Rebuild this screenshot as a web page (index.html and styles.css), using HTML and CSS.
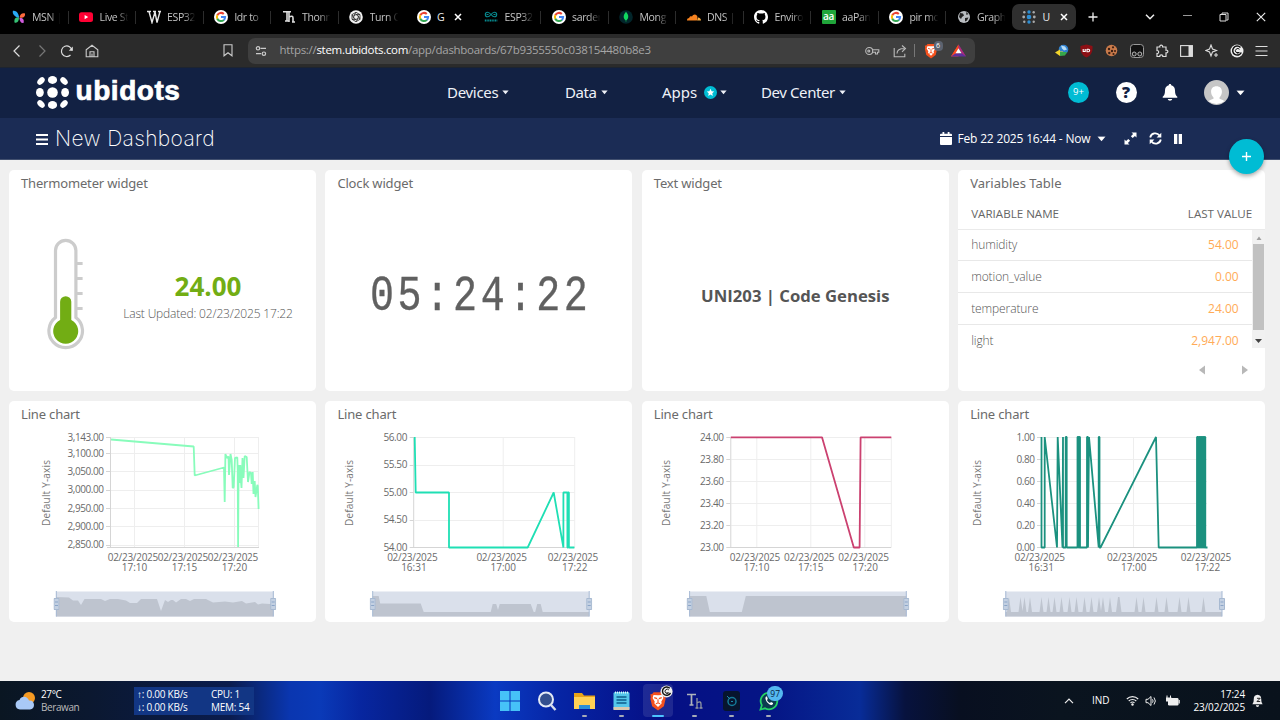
FILE: index.html
```html
<!DOCTYPE html>
<html lang="en">
<head>
<meta charset="utf-8">
<title>Ubidots | New Dashboard</title>
<link rel="stylesheet" href="styles.css">
</head>
<body>
<svg width="0" height="0" class="defs">
  <defs>
    <symbol id="google" viewBox="0 0 14 14"><circle cx="7" cy="7" r="7" fill="#fff"/><g fill="none" stroke-width="2"><path d="M3.3 5.2A4.1 4.1 0 0 1 9.8 4" stroke="#ea4335"/><path d="M3.4 9A4.1 4.1 0 0 1 3.4 5" stroke="#fbbc05"/><path d="M9.9 9.9A4.1 4.1 0 0 1 3.3 8.8" stroke="#34a853"/><path d="M7 7h4.1a4.1 4.1 0 0 1-1.3 3" stroke="#4285f4"/></g></symbol>
    <symbol id="brave" viewBox="0 0 14 16"><path d="M3.5 1h7l1.2 1.4 1.4.2-.3 2.3.3 1.2-1.4 6L7 15.6 2.300 12.100.9 6.100 1.200 4.900.9 2.600 2.300 2.400z" fill="#f4511e"/><path d="M7 3.300 10.600 3.200 11.300 5.500 9.600 8.500 10 9.700 7 12.800 4 9.700 4.400 8.500 2.700 5.500 3.400 3.200z" fill="#fff"/><path d="M4 5.300l2.300.8M10 5.300l-2.300.8M7 6.500v3M5.300 10.300 7 9.400l1.700.9" stroke="#f4511e" stroke-width=".9" fill="none"/></symbol>
    <symbol id="swirl" viewBox="0 0 14 14"><circle cx="7" cy="7" r="6.500" fill="#eee"/><path d="M10.500 3.500A4.500 4.500 0 1 0 11.300 8.500" fill="none" stroke="#111" stroke-width="1.500"/><path d="M9.500 5.300A2.300 2.300 0 1 0 9.300 8.500H7" fill="none" stroke="#111" stroke-width="1"/></symbol>
    <symbol id="handle" viewBox="0 0 6 12"><path d="M.5.500h5v11h-5z" fill="#c3d0e2" stroke="#a7b9d1"/><path d="M1.500 4h3M1.500 7.500h3" stroke="#8ba5c8"/></symbol>
    <symbol id="caret" viewBox="0 0 8 5"><path d="M.4.200h7.200L4 4.600z" fill="currentColor"/></symbol>
  </defs>
</svg>

<div class="tabs">
  <div class="tab"><svg width="14" height="14" viewBox="0 0 14 14"><path d="M6.500 8C1 6 .2 2.500 1 .800 4 0 6.500 3 7 7z" fill="#29a9f5"/><path d="M7 7.500C3 7 2 9 2.500 12.500 5.500 13.500 7 11 7 7.500z" fill="#36c275"/><path d="M7.500 7.500C8 4 10.500 2.500 13 3.500c.5 3-1.500 5-5.500 4z" fill="#ff6a3d"/><path d="M7.500 8c3-.5 5 1 4 5C9 13.500 7.500 11 7.500 8z" fill="#d05bdc"/></svg><span>MSN |</span></div>
  <div class="tab"><svg width="14" height="14" viewBox="0 0 14 14"><rect y="2.200" width="14" height="9.800" rx="2.500" fill="#f03"/><path d="M5.600 5v4.200L9.200 7.100z" fill="#fff"/></svg><span>Live St</span></div>
  <div class="tab"><svg width="14" height="14" viewBox="0 0 14 14"><path d="M0 1.500h4M2 1.500l3 11 3-10.500 2 10.500 3-11M6 1.500h3M11 1.500h3" fill="none" stroke="#e8e8e8" stroke-width="1.400"/></svg><span>ESP32</span></div>
  <div class="tab"><svg width="14" height="14"><use href="#google"/></svg><span>ldr to</span></div>
  <div class="tab"><svg width="14" height="14" viewBox="0 0 14 14"><path d="M1 1.800h8M5 1.800V11M3 11h4M7 1.800V12M7 7q4-2 4 1v4M10 12h3" fill="none" stroke="#ddd" stroke-width="1.600"/></svg><span>Thonn</span></div>
  <div class="tab quiet"><svg width="14" height="14" viewBox="0 0 14 14"><circle cx="7" cy="7" r="6.800" fill="#f2f2f2"/><g fill="none" stroke="#222" stroke-width=".8"><path d="M7 2.300l4 2.300v4.700l-4 2.400-4-2.400V4.600z"/><path d="M7 4.500l2.200 1.300v2.500L7 9.500 4.800 8.300V5.800zM7 2.300l-2.200 3.500M11 4.600 7 4.500M11 9.300 9.200 5.800M7 11.700l2.200-3.400M3 9.300l4 .2M3 4.600l1.800 3.700"/></g></svg><span>Turn C</span></div>
  <div class="tab quiet"><svg width="14" height="14"><use href="#google"/></svg><span class="short">G</span><svg class="x" width="8" height="8" viewBox="0 0 8 8"><path d="M1 1l6 6M7 1 1 7" stroke="#fff" stroke-width="1.500"/></svg></div>
  <div class="tab"><svg width="14" height="14" viewBox="0 0 14 14"><g fill="none" stroke="#078a8f" stroke-width="1.100"><path d="M7 4.500C5.600 2.800 4.700 2.200 3.600 2.200a2.300 2.300 0 0 0 0 4.600C4.700 6.800 5.600 6.200 7 4.500s2.300-2.300 3.400-2.300a2.300 2.300 0 0 1 0 4.600C9.300 6.800 8.400 6.200 7 4.500zM2.500 4.500h2M9.500 4.500h2"/><path d="M.8 10.500h12.500" stroke-width="2.200" stroke-dasharray="1.200 .5"/></g></svg><span>ESP32</span></div>
  <div class="tab"><svg width="14" height="14"><use href="#google"/></svg><span>sarder</span></div>
  <div class="tab"><svg width="14" height="14" viewBox="0 0 14 14"><circle cx="7" cy="7" r="6.800" fill="#02252a"/><path d="M7 1.800c3.500 4 2.500 7 .2 8.700V12h-.4v-1.500C4.500 8.800 3.500 5.800 7 1.800z" fill="#10d860"/></svg><span>Mong</span></div>
  <div class="tab"><svg width="14" height="14" viewBox="0 0 14 14"><path d="M0 10.500C0 8.700 1 8 2.200 8 2.300 6.500 4 5.800 5 6.600 6 3.500 10 3.700 10.500 7l-.6 3.500z" fill="#f6821f"/><path d="M10 10.500l1-3.100c1.800 0 2.900 1.300 3 3.100z" fill="#fbad41"/></svg><span>DNS |</span></div>
  <div class="tab"><svg width="14" height="14" viewBox="0 0 16 16"><path fill="#fff" d="M8 0C3.580 0 0 3.580 0 8c0 3.540 2.290 6.530 5.470 7.590.4.070.55-.17.55-.38 0-.19-.01-.82-.01-1.490-2.010.37-2.530-.49-2.690-.94-.09-.23-.48-.94-.82-1.130-.28-.15-.68-.52-.01-.53.63-.01 1.080.58 1.230.82.72 1.210 1.870.87 2.330.66.070-.52.28-.87.51-1.070-1.780-.2-3.640-.89-3.640-3.950 0-.87.31-1.590.82-2.150-.08-.2-.36-1.020.08-2.120 0 0 .67-.21 2.200.82.64-.18 1.320-.27 2-.27s1.360.09 2 .27c1.530-1.040 2.200-.82 2.200-.82.44 1.100.16 1.920.08 2.120.51.56.82 1.270.82 2.150 0 3.070-1.870 3.750-3.650 3.950.29.25.54.73.54 1.480 0 1.070-.01 1.930-.01 2.200 0 .21.15.46.55.38A8.010 8.010 0 0 0 16 8c0-4.420-3.580-8-8-8"/></svg><span>Enviro</span></div>
  <div class="tab"><b class="aa">aa</b><span>aaPan</span></div>
  <div class="tab"><svg width="14" height="14"><use href="#google"/></svg><span>pir mo</span></div>
  <div class="tab quiet"><svg width="14" height="14" viewBox="0 0 14 14"><circle cx="7" cy="7" r="6" fill="#b9bdc1"/><path d="M3 3l3 .5 1 2-2 1.500-1 2L2 7zM9 2l2.500 2-2 1zM8 8l3.500-.5-1.500 3-2 1z" fill="#222"/></svg><span>Graph</span></div>
  <div class="tab active"><svg width="14" height="14" viewBox="0 0 14 14"><g fill="#2d8fd5"><circle cx="7" cy="7" r="2.300"/><circle cx="7" cy="2" r="1.700"/><circle cx="7" cy="12" r="1.700"/></g><g fill="#aaa"><circle cx="2.300" cy="2.300" r="1.200"/><circle cx="1.700" cy="7" r="1.400"/><circle cx="2.300" cy="11.700" r="1.200"/><circle cx="11.700" cy="2.300" r="1.200"/><circle cx="12.300" cy="7" r="1.400"/><circle cx="11.700" cy="11.700" r="1.200"/></g></svg><span class="short">U</span><svg class="x" width="8" height="8" viewBox="0 0 8 8"><path d="M1 1l6 6M7 1 1 7" stroke="#fff" stroke-width="1.500"/></svg></div>
  <div class="newtab"><svg width="10" height="10" viewBox="0 0 10 10"><path d="M5 .5v9M.5 5h9" stroke="#eee" stroke-width="1.300"/></svg></div>
  <div class="wincell"><svg width="10" height="6" viewBox="0 0 10 6"><path d="M1 .8l4 4 4-4" fill="none" stroke="#eee" stroke-width="1.500"/></svg></div>
  <div class="wincell"><svg width="9" height="10" viewBox="0 0 9 10"><path d="M0 3.500h9" stroke="#999"/></svg></div>
  <div class="wincell"><svg width="10" height="10" viewBox="0 0 10 10"><path d="M1 2.500h6v6.500H1zM3 2V1h6v7H7.500" fill="none" stroke="#ddd"/></svg></div>
  <div class="wincell"><svg width="10" height="10" viewBox="0 0 10 10"><path d="M.8.800l8.400 8.400M9.200.800.800 9.200" stroke="#eee" stroke-width="1.100"/></svg></div>
</div>

<div class="toolbar">
  <div class="cell"><svg width="12" height="14" viewBox="0 0 12 14"><path d="M8.500 1.500 3 7l5.500 5.500" fill="none" stroke="#ddd" stroke-width="1.200"/></svg></div>
  <div class="cell"><svg width="12" height="14" viewBox="0 0 12 14"><path d="M3.500 1.500 9 7l-5.500 5.500" fill="none" stroke="#777" stroke-width="1.200"/></svg></div>
  <div class="cell"><svg width="14" height="14" viewBox="0 0 14 14"><path d="M10.500 11A5.300 5.300 0 1 1 12 6.500" fill="none" stroke="#ddd" stroke-width="1.200"/><path d="M12.800 2.500v4.300H8.800z" fill="#ddd"/></svg></div>
  <div class="cell"><svg width="14" height="14" viewBox="0 0 14 14"><path d="M1.200 5.700 7 1.200l5.800 4.500v7H1.200zM5 12.500V7.800h4v4.700M7 9.500v3" fill="none" stroke="#ccc" stroke-width="1.100"/></svg></div>
  <div class="cell mark"><svg width="10" height="13" viewBox="0 0 10 13"><path d="M1 .800h8v11L5 8.800 1 11.800z" fill="none" stroke="#ccc" stroke-width="1.100"/></svg></div>
  <div class="address">
    <svg width="12" height="12" viewBox="0 0 12 12"><g fill="none" stroke="#ccc" stroke-width="1.200"><circle cx="3" cy="3.300" r="1.700"/><path d="M5.500 3.300H11M1 8.700h5.200"/><circle cx="8.900" cy="8.700" r="1.700"/></g></svg>
    <span class="url">https://<b>stem.ubidots.com</b>/app/dashboards/67b9355550c038154480b8e3</span>
    <div class="cell k"><svg width="15" height="10" viewBox="0 0 15 10"><g fill="none" stroke="#bbb" stroke-width="1.100"><circle cx="4.200" cy="5" r="3.500"/><circle cx="3.800" cy="5" r="1"/><path d="M7.500 3.700h6.300v2.600h-1.300V8h-2V6.300h-3"/></g></svg></div>
    <div class="cell s"><svg width="14" height="14" viewBox="0 0 14 14"><path d="M1.200 4v8.800h10.600v-3M4 9.500C4 6 6.500 4.500 11.500 4.500M9 1.500l3.500 3L9 7.800" fill="none" stroke="#bbb" stroke-width="1.100"/></svg></div>
    <i class="bar"></i>
    <div class="cell b"><svg width="14" height="16"><use href="#brave"/></svg><em>6</em></div>
    <div class="cell t"><svg width="15" height="13" viewBox="0 0 15 13"><path d="M7.500.5 0 12.500h7.500z" fill="#f4461f"/><path d="M7.500.500 15 12.500H0l2-3.200h9z" fill="#5f2f9c"/><path d="M7.500.500 0 12.500 5 9l2.500-5z" fill="#ff4a1c"/><path d="M7.500.500 15 12.500 10.300 9 7.500 4z" fill="#b02a7a"/><path d="M7.500 4.300 10.500 9.300h-6z" fill="#fff"/></svg></div>
  </div>
  <div class="ext">
    <div class="cell"><svg width="14" height="13" viewBox="0 0 14 13"><circle cx="8.500" cy="5.500" r="4.800" fill="#2f80d0"/><path d="M6 1.500l4 1 2 3-3 1-2-2z" fill="#b8dcf5"/><path d="M0 8.500l5-3v2h3v3H5V12z" fill="#f2d52b"/><path d="M5 8h7l-2 3.500-5 .5z" fill="#37a84a"/></svg></div>
    <div class="cell"><svg width="13" height="14" viewBox="0 0 13 14"><path d="M6.500.500 12.500 2c.5 6-1.500 9.500-6 11.500C2 11.500 0 8 .5 2z" fill="#8c0f14"/><path d="M3.200 5v2.500h2V5M7 5v2.800h1.500c1.500 0 1.500-2.500 0-2.500H7" fill="none" stroke="#fff" stroke-width="1.100"/></svg></div>
    <div class="cell"><svg width="13" height="13" viewBox="0 0 13 13"><circle cx="6.500" cy="6.500" r="5.800" fill="#c97a4a"/><g fill="#3a1e12"><circle cx="4" cy="5" r="1.200"/><circle cx="8" cy="3.300" r="1.100"/><circle cx="7" cy="7" r="1.200"/><circle cx="10" cy="7" r="1"/><circle cx="4.300" cy="9" r="1.200"/><circle cx="8.500" cy="10" r="1.100"/></g></svg></div>
    <div class="cell"><svg width="14" height="14" viewBox="0 0 14 14"><rect x=".5" y=".5" width="13" height="13" rx="3" fill="#111" stroke="#999"/><circle cx="4.200" cy="10" r="2" fill="#222" stroke="#bbb"/><circle cx="9.800" cy="10" r="2" fill="#222" stroke="#bbb"/></svg></div>
    <div class="cell"><svg width="14" height="14" viewBox="0 0 14 14"><path d="M2 3h2.800c-.6-2.500 3.400-2.500 2.800 0H11v3.200c2.500-.6 2.500 3.200 0 2.700V12.500H7.800c.4-2.200-3.400-2.200-3 0H2V9.500c2.200.3 2.200-3.200 0-3z" fill="none" stroke="#ddd" stroke-width="1.200"/></svg></div>
    <div class="cell"><svg width="13" height="12" viewBox="0 0 13 12"><rect x=".6" y=".6" width="11.800" height="10.800" fill="none" stroke="#ddd" stroke-width="1.100"/><path d="M8.500 1h4v10h-4z" fill="#ddd"/></svg></div>
    <div class="cell"><svg width="14" height="14" viewBox="0 0 14 14"><path d="M6 1l1.500 4L11.500 6.500 7.500 8 6 12 4.500 8 .8 6.500 4.500 5zM11 9v4M9 11h4" fill="none" stroke="#ddd" stroke-width="1.100"/></svg></div>
    <div class="cell"><svg width="14" height="14"><use href="#swirl"/></svg></div>
    <div class="cell"><svg width="13" height="12" viewBox="0 0 13 12"><path d="M.5 1.500h12M.5 6h12M.5 10.500h12" stroke="#ddd" stroke-width="1.200"/></svg></div>
  </div>
</div>

<header class="top">
  <div class="logo">
    <svg width="33" height="33" viewBox="0 0 33 33" fill="#fff"><circle cx="16.500" cy="16.500" r="5.300"/><ellipse cx="16.500" cy="4" rx="4.600" ry="3.900"/><ellipse cx="16.500" cy="29" rx="4.600" ry="3.900"/><ellipse cx="3.900" cy="16.500" rx="3.900" ry="4.600"/><ellipse cx="29.100" cy="16.500" rx="3.900" ry="4.600"/><ellipse cx="5" cy="5" rx="4.300" ry="3" transform="rotate(-45 5 5)"/><ellipse cx="28" cy="28" rx="4.300" ry="3" transform="rotate(-45 28 28)"/><ellipse cx="28" cy="5" rx="4.300" ry="3" transform="rotate(45 28 5)"/><ellipse cx="5" cy="28" rx="4.300" ry="3" transform="rotate(45 5 28)"/></svg>
    <span>ubidots</span>
  </div>
  <nav>
    <a class="n1">Devices<svg width="7" height="5"><use href="#caret"/></svg></a>
    <a class="n2">Data<svg width="7" height="5"><use href="#caret"/></svg></a>
    <a class="n3">Apps<svg class="star" width="13" height="13" viewBox="0 0 13 13"><circle cx="6.500" cy="6.500" r="6.500" fill="#00bcd4"/><path d="M6.500 2.800l1.100 2.400 2.600.3-1.900 1.800.5 2.600-2.300-1.300-2.300 1.300.5-2.600-1.900-1.800 2.600-.3z" fill="#fff"/></svg><svg width="7" height="5"><use href="#caret"/></svg></a>
    <a class="n4">Dev Center<svg width="7" height="5"><use href="#caret"/></svg></a>
  </nav>
  <div class="user">
    <span class="nine">9+</span>
    <span class="help">?</span>
    <svg class="bell" width="16" height="17" viewBox="0 0 16 17"><path d="M8 0c.8 0 1.200.5 1.200 1.300C12 2 13 4 13 6.500c0 3.500.8 4.800 2.300 6.200v1.100H.7v-1.100C2.200 11.300 3 10 3 6.500 3 4 4 2 6.800 1.300 6.800.500 7.200 0 8 0zM5.800 15h4.400C10 17.200 6 17.200 5.800 15z" fill="#fff"/></svg>
    <svg class="avatar" width="25" height="25" viewBox="0 0 25 25"><circle cx="12.500" cy="12.500" r="12.500" fill="#c6c6c6"/><path d="M12.500 6.200c3.700 0 5.700 2.500 5.400 6-.2 2.600-1.300 4-2.400 5.200v1.300c1.800.6 3.500 1 4.800 2.600A12.500 12.500 0 0 1 4.700 21.300c1.300-1.600 3-2 4.800-2.600v-1.300c-1.100-1.200-2.200-2.600-2.400-5.200-.3-3.500 1.700-6 5.400-6z" fill="#fff"/></svg>
    <svg class="ucaret" width="9" height="6" viewBox="0 0 8 5"><use href="#caret"/></svg>
  </div>
</header>

<div class="sub">
  <svg class="burger" width="12" height="11" viewBox="0 0 12 11"><path d="M0 1h12M0 5.500h12M0 10h12" stroke="#fff" stroke-width="1.800"/></svg>
  <h1>New Dashboard</h1>
  <svg class="cal" width="12" height="13" viewBox="0 0 12 13"><path d="M2.500 0h1.800v1.700h3.400V0h1.800v1.700H11a1 1 0 0 1 1 1V4H0V2.700a1 1 0 0 1 1-1h1.500zM0 5h12v7a1 1 0 0 1-1 1H1a1 1 0 0 1-1-1z" fill="#fff"/></svg>
  <span class="range">Feb 22 2025 16:44 - Now</span>
  <svg class="rcaret" width="9" height="6" viewBox="0 0 8 5"><use href="#caret"/></svg>
  <svg class="exp" width="13" height="13" viewBox="0 0 13 13"><path d="M7.500.500h5v5L10.900 3.900 8.700 6.100 6.900 4.300 9.100 2.100zM5.500 12.500h-5v-5l1.600 1.600 2.200-2.200 1.800 1.800-2.200 2.200z" fill="#fff"/></svg>
  <svg class="ref" width="13" height="13" viewBox="0 0 13 13"><path d="M1.200 5.500A5.200 5.200 0 0 1 10.500 3.500M11.800 7.500A5.200 5.200 0 0 1 2.500 9.500" fill="none" stroke="#fff" stroke-width="1.800"/><path d="M12.300.8v4.700H7.600zM.7 12.200V7.500h4.700z" fill="#fff"/></svg>
  <svg width="8" height="10" viewBox="0 0 8 10"><path d="M0 0h3.300v10H0zM4.700 0H8v10H4.700z" fill="#fff"/></svg>
  <button class="fab"><svg width="9" height="9" viewBox="0 0 9 9"><path d="M4.500 0v9M0 4.500h9" stroke="#fff" stroke-width="1.400"/></svg></button>
</div>

<main class="grid">
  <section class="card">
    <h2>Thermometer widget</h2>
    <div class="thermo">
      <svg width="40" height="114" viewBox="46 237 40 114"><path d="M55.500 317.500V250.500a10.200 10.200 0 0 1 20.400 0V317.500a16.800 16.800 0 1 1-20.400 0z" fill="#fff" stroke="#ccc" stroke-width="3.200"/><path d="M77 263.500h5.600M77 278.500h5.600M77 293.500h5.600M77 308.500h5.600" stroke="#ccc" stroke-width="2.800"/><path d="M60.100 320V301.800a5.600 5.600 0 0 1 11.200 0V320a12.500 12.500 0 1 1-11.200 0z" fill="#72ad14"/></svg>
      <div class="reading"><strong>24.00</strong><span>Last Updated: 02/23/2025 17:22</span></div>
    </div>
  </section>
  <section class="card">
    <h2>Clock widget</h2>
    <div class="clock"><span>05:24:22</span></div>
  </section>
  <section class="card">
    <h2>Text widget</h2>
    <div class="textw"><span>UNI203 | Code Genesis</span></div>
  </section>
  <section class="card">
    <h2 class="wide">Variables Table</h2>
    <div class="thead"><span>VARIABLE NAME</span><span>LAST VALUE</span></div>
    <div class="tbody">
      <div class="rows">
        <div class="row"><span>humidity</span><b>54.00</b></div>
        <div class="row"><span>motion_value</span><b>0.00</b></div>
        <div class="row"><span>temperature</span><b>24.00</b></div>
        <div class="row"><span>light</span><b>2,947.00</b></div>
      </div>
      <div class="scroll">
        <svg width="6" height="4" viewBox="0 0 6 4"><path d="M.5 4 3 .5 5.500 4z" fill="#a0a0a0"/></svg>
        <i></i>
        <svg width="7" height="4" viewBox="0 0 7 4"><path d="M0 0h7L3.500 4z" fill="#444"/></svg>
      </div>
    </div>
    <div class="pager"><svg width="6" height="10" viewBox="0 0 6 10"><path d="M6 .5v9L0 5z" fill="#b8b8b8"/></svg><svg width="6" height="10" viewBox="0 0 6 10"><path d="M0 .5v9L6 5z" fill="#b8b8b8"/></svg></div>
  </section>

  <section class="card">
    <h2>Line chart</h2>
    <svg class="chart" viewBox="9 429 307 193">
      <path class="gl" d="M111 437.500h148M111 453.500h148M111 471.500h148M111 490.500h148M111 508.500h148M111 526.500h148M111 545.500h148M134.500 437v110M184.500 437v110M234.500 437v110M258.500 437v110"/>
      <path class="ax" d="M110.500 437v110.500M107 547.500h152M106 437.500h4M106 453.500h4M106 471.500h4M106 490.500h4M106 508.500h4M106 526.500h4M106 545.500h4"/>
      <g class="yl"><text x="67.500" y="440.500" textLength="36.500">3,143.00</text><text x="67.500" y="456.500" textLength="36.500">3,100.00</text><text x="67.500" y="474.500" textLength="36.500">3,050.00</text><text x="67.500" y="493" textLength="36.500">3,000.00</text><text x="67.500" y="511.500" textLength="36.500">2,950.00</text><text x="67.500" y="529.500" textLength="36.500">2,900.00</text><text x="67.500" y="548" textLength="36.500">2,850.00</text></g>
      <g class="xl"><text x="133" y="561.300" textLength="50.500">02/23/2025</text><text x="134.500" y="570.800">17:10</text><text x="183" y="561.300" textLength="50.500">02/23/2025</text><text x="184.500" y="570.800">17:15</text><text x="233" y="561.300" textLength="50.500">02/23/2025</text><text x="234.500" y="570.800">17:20</text></g>
      <text class="name" transform="translate(50 526) rotate(-90)" textLength="66">Default Y-axis</text>
      <path class="ln c1" d="M111 439.500 193.700 446.500 194.700 475.500 224 467.500 224.700 502 225.400 454 227 458 228.500 456.500 229 475 230.500 454 231.700 460 232.700 488 233.700 487 235 458 237.300 457.500 237.700 470 238.100 547 238.600 465 239.500 483 240.300 465 241 482 241.500 488 242.500 458 243.500 478 244.700 456 246.700 457 248 482 249.500 472 251 473 251.700 484 252.700 472 253.500 494 254.700 481 255.500 497 257.300 485 257.800 486 258.600 509"/>
      <path class="sb" d="M56 591.500h217.500v25H56z"/>
      <path class="sf" d="M56 616.500V597L69 597.500 73 600.500 78 600.500 81 605 84.500 599 101 599 105 601 110 599 118 599 126 600.500 130 603 137 603 141 599 157 599 161 611 165 600 168 602 171 600 173 600 176 602.500 181 599 186 599 190 601 194 599 206 599 213 602.500 225 601.500 233 602.500 242 601 246 603.500 255 602 258 604.500 262 603.500 270 604 273.500 602V616.500z"/>
      <path class="se" d="M56.300 591v25.500M273.300 591v25.500"/>
      <use href="#handle" x="53.500" y="598" width="6" height="12"/><use href="#handle" x="270.200" y="598" width="6" height="12"/>
    </svg>
  </section>

  <section class="card">
    <h2>Line chart</h2>
    <svg class="chart" viewBox="325.300 429 307 193">
      <path class="gl" d="M415 437.500h160M415 465.500h160M415 492.500h160M415 520.500h160M503.500 437v110M575 437v110"/>
      <path class="ax" d="M414 437v110.500M410 547.500h165M410 437.500h4M410 465.500h4M410 492.500h4M410 520.500h4"/>
      <g class="yl"><text x="383.700" y="440.500" textLength="24">56.00</text><text x="383.700" y="468" textLength="24">55.50</text><text x="383.700" y="495.500" textLength="24">55.00</text><text x="383.700" y="523" textLength="24">54.50</text><text x="383.700" y="550.500" textLength="24">54.00</text></g>
      <g class="xl"><text x="412.700" y="561.300" textLength="50.500">02/23/2025</text><text x="414.200" y="570.800">16:31</text><text x="502" y="561.300" textLength="50.500">02/23/2025</text><text x="503.500" y="570.800">17:00</text><text x="573.300" y="561.300" textLength="50.500">02/23/2025</text><text x="575" y="570.800">17:22</text></g>
      <text class="name" transform="translate(353.300 526) rotate(-90)" textLength="66">Default Y-axis</text>
      <path class="ln c2" d="M415 437 416 492.500H449.300V547.500H528L554 492.500 563.700 547.500V492.500H567.700V547.500H568.300V492.500H569.200V547.500H574.700"/>
      <path class="sb" d="M373 591.500h216.500v25H373z"/>
      <path class="sf" d="M373 616.500V596H379L380.500 603.500H421L424 612H491L493 604H496.500L498.300 610 500 604H531L534 612H535.500L537.500 604H541L543 612H589.500V616.500z"/>
      <path class="se" d="M373 591v25.500M589.500 591v25.500"/>
      <use href="#handle" x="370" y="598" width="6" height="12"/><use href="#handle" x="586.500" y="598" width="6" height="12"/>
    </svg>
  </section>

  <section class="card">
    <h2>Line chart</h2>
    <svg class="chart" viewBox="641.700 429 307 193">
      <path class="gl" d="M731 437.500h160M731 459.500h160M731 481.500h160M731 503.500h160M731 525.500h160M756.500 437v110M810.500 437v110M864.500 437v110M891 437v110"/>
      <path class="ax" d="M730.500 437v110.500M726 547.500h165M726 437.500h4M726 459.500h4M726 481.500h4M726 503.500h4M726 525.500h4"/>
      <g class="yl"><text x="699.700" y="440.500" textLength="24">24.00</text><text x="699.700" y="462.500" textLength="24">23.80</text><text x="699.700" y="484.500" textLength="24">23.60</text><text x="699.700" y="506.500" textLength="24">23.40</text><text x="699.700" y="528.500" textLength="24">23.20</text><text x="699.700" y="550.500" textLength="24">23.00</text></g>
      <g class="xl"><text x="754.700" y="561.300" textLength="50.500">02/23/2025</text><text x="756.300" y="570.800">17:10</text><text x="809" y="561.300" textLength="50.500">02/23/2025</text><text x="810.500" y="570.800">17:15</text><text x="863.300" y="561.300" textLength="50.500">02/23/2025</text><text x="865" y="570.800">17:20</text></g>
      <text class="name" transform="translate(669.500 526) rotate(-90)" textLength="66">Default Y-axis</text>
      <path class="ln c3" d="M730.500 437.300H821.700L853.500 547.500H859.300L860.300 437.300H891"/>
      <path class="sb" d="M689.300 591.500h216.700v25H689.300z"/>
      <path class="sf" d="M689.300 616.500V596H706L709.500 612H741.500L745.500 596H906V616.500z"/>
      <path class="se" d="M689.300 591v25.500M906 591v25.500"/>
      <use href="#handle" x="686.300" y="598" width="6" height="12"/><use href="#handle" x="903" y="598" width="6" height="12"/>
    </svg>
  </section>

  <section class="card">
    <h2>Line chart</h2>
    <svg class="chart" viewBox="958 429 307 193">
      <path class="gl" d="M1041 437.500h166M1041 459.500h166M1041 481.500h166M1041 503.500h166M1041 525.500h166M1133.500 437v110"/>
      <path class="ax" d="M1041.500 437v110.500M1037 547.500h170M1037 437.500h4M1037 459.500h4M1037 481.500h4M1037 503.500h4M1037 525.500h4"/>
      <g class="yl"><text x="1016.500" y="440.500" textLength="18.500">1.00</text><text x="1016.500" y="462.500" textLength="18.500">0.80</text><text x="1016.500" y="484.500" textLength="18.500">0.60</text><text x="1016.500" y="506.500" textLength="18.500">0.40</text><text x="1016.500" y="528.500" textLength="18.500">0.20</text><text x="1016.500" y="550.500" textLength="18.500">0.00</text></g>
      <g class="xl"><text x="1039.800" y="561.300" textLength="50.500">02/23/2025</text><text x="1041.300" y="570.800">16:31</text><text x="1132.300" y="561.300" textLength="50.500">02/23/2025</text><text x="1133.700" y="570.800">17:00</text><text x="1206" y="561.300" textLength="50.500">02/23/2025</text><text x="1207.500" y="570.800">17:22</text></g>
      <text class="name" transform="translate(980.500 526) rotate(-90)" textLength="66">Default Y-axis</text>
      <path class="ln c4" d="M1041.500 437V547.500H1044.700V437L1057 547.500 1057.700 437 1062.500 547.500 1063 437V547.500H1065.700V437H1066.700V547.500H1077.500V437H1078.500V547.500H1079.500V437H1080V547.500H1087V437H1088V547.500L1089 437 1098.700 547.500V437H1099.500V547.500H1100.500L1156 437 1158.700 547.500H1197V437H1197.800V547.500H1198.500V437H1199.500V547.500H1200.500V437H1201.500V547.500H1202.500V437H1203.500V547.500H1204.500V437H1205.300V547.500H1207.500"/>
      <path class="sb" d="M1005.500 591.500h216.500v25H1005.500z"/>
      <path class="sf" d="M1005.500 616.500V612H1007L1009 597 1011 612H1018.500L1020.500 597 1022.500 611 1024.500 597 1026.500 612H1028L1030 597 1032 612H1039.500L1041.500 597 1043.500 612H1046.500L1048.500 597 1050.500 612H1052.500L1054.500 597 1056.500 612H1059.500L1061.500 597 1063.500 612H1067.500L1069.500 597 1071.500 612H1074.500L1076.500 597 1078.500 612H1082.500L1084.500 597 1086.500 612H1089.500L1091.500 597 1093.500 612H1097L1099 597 1101 611 1103 597 1105 612H1108L1110 597 1112 612H1116L1118 597H1119.500L1121.500 612H1134.500L1136.500 597 1138.500 612H1141.500L1143.500 597 1145.500 612H1154.500L1156.500 597 1158.500 612H1164.500L1166.500 597 1168.500 612H1177.500L1179.500 597 1181.500 612H1186.500L1188.500 597 1190.500 612H1201.500L1203.500 597 1205.500 612H1222V616.500z"/>
      <path class="se" d="M1005.800 591v25.500M1222 591v25.500"/>
      <use href="#handle" x="1002.800" y="598" width="6" height="12"/><use href="#handle" x="1219" y="598" width="6" height="12"/>
    </svg>
  </section>
</main>

<footer class="taskbar">
  <div class="weather"><svg width="24" height="20" viewBox="0 0 24 20"><circle cx="15" cy="7" r="6" fill="#f59a23"/><path d="M6 18.500a4.800 4.800 0 0 1-.5-9.500C7 4.500 13.500 4.500 15 9.500c6-1 7 8.500 1 9z" fill="#a9c9f7"/></svg><p>27°C<br><span>Berawan</span></p></div>
  <div class="net"><p>↑: 0.00 KB/s<br>↓: 0.00 KB/s</p><p>CPU: 1<br>MEM: 54</p></div>
  <div class="apps">
    <div class="app"><svg width="20" height="20" viewBox="0 0 20 20"><path d="M0 0h9.500v9.500H0zM10.500 0H20v9.500h-9.500zM0 10.500h9.500V20H0zM10.500 10.500H20V20h-9.500z" fill="#46c2f8"/></svg></div>
    <div class="app"><svg width="20" height="20" viewBox="0 0 20 20"><circle cx="9" cy="8.500" r="7" fill="#34508f" stroke="#e3e9f5" stroke-width="2"/><path d="M14 14l4.500 5" stroke="#d5dced" stroke-width="2.400"/></svg></div>
    <div class="app run"><svg width="21" height="18" viewBox="0 0 21 18"><path d="M0 1h8l2 2.500h11V17H0z" fill="#e8a317"/><path d="M0 5h21v12H0z" fill="#ffd155"/><path d="M5 13h11v4H5z" fill="#2b8fd8"/></svg></div>
    <div class="app run"><svg width="17" height="20" viewBox="0 0 17 20"><rect x=".5" y="1" width="16" height="18" rx="1.500" fill="#55c7ea"/><path d="M.5 16h16v3H.5z" fill="#d9c9b0"/><path d="M3.500 6h10M3.500 9h10M3.500 12h10" stroke="#0d5d8c" stroke-width="1.300"/><path d="M2 1.500h13" stroke="#dff4fc" stroke-width="2" stroke-dasharray="1 1"/></svg></div>
    <div class="app run on"><svg width="18" height="20" viewBox="0 0 14 16"><use href="#brave"/></svg><svg class="over" width="13" height="13" viewBox="0 0 14 14"><use href="#swirl"/></svg></div>
    <div class="app run"><svg width="18" height="18" viewBox="0 0 18 18"><path d="M1 2.500h9M5.500 2.500V13M3.500 13h4" stroke="#aeb3bb" stroke-width="1.700" fill="none"/><path d="M11 6v10M11 11q4-2.500 4 1v4M9.500 16h3M13.500 16h3" stroke="#9298a3" stroke-width="1.300" fill="none"/></svg></div>
    <div class="app run"><svg width="17" height="20" viewBox="0 0 17 20"><rect width="17" height="20" rx="3" fill="#07152e"/><circle cx="9" cy="10.500" r="4" fill="none" stroke="#147a98" stroke-width="1.500"/><path d="M4 5l3 3M8 10.500h2" stroke="#1a8cab"/></svg></div>
    <div class="app run"><svg width="20" height="20" viewBox="0 0 20 20"><path d="M1.500 18.500l1.300-4.300A8.300 8.300 0 1 1 6 17.300z" fill="#0b3b50" stroke="#25d366" stroke-width="1.800"/><path d="M7 5.500c-2 2 1.500 7.500 5 8.500 1.500.2 2.300-1.200 2-2l-2-1-1 1c-1.500-.6-2.500-1.800-3-3l.8-1L8 5.500z" fill="#fff"/></svg><em>97</em></div>
  </div>
  <svg class="chev" width="10" height="6" viewBox="0 0 10 6"><path d="M1 5.200l4-4 4 4" fill="none" stroke="#eee" stroke-width="1.200"/></svg>
  <span class="lang">IND</span>
  <svg class="wifi" width="13" height="11" viewBox="0 0 13 11"><g fill="none" stroke="#eee" stroke-width="1.100"><path d="M.8 4a8 8 0 0 1 11.400 0M2.700 6a5.400 5.400 0 0 1 7.600 0M4.500 7.900a2.800 2.800 0 0 1 4 0"/></g><circle cx="6.500" cy="9.500" r="1.200" fill="#eee"/></svg>
  <svg class="spk" width="12" height="12" viewBox="0 0 12 12"><path d="M1 4.300h2L6 1.500v9L3 7.700H1zM7.500 4.300q1.200 1.700 0 3.400M9 2.500q2.700 3.500 0 7" fill="none" stroke="#eee"/></svg>
  <svg class="bat" width="14" height="12" viewBox="0 0 14 12"><rect x="2" y="3" width="10.500" height="7.500" rx="1.200" fill="#eee"/><path d="M12.500 5h1.300v3.500h-1.300z" fill="#eee"/><path d="M1 .5v3M4.500.5v3M0 3h5.500v3H0z" stroke="#eee" fill="#eee"/></svg>
  <p class="time">17:24<br>23/02/2025</p>
  <svg class="nb" width="13" height="14" viewBox="0 0 11 13"><path d="M5.500.800C8 1 9 2.500 9 5c0 2.500.5 3 1.300 4.500H.7C1.500 8 2 7.500 2 5 2 2.500 3 1 5.500.800zM4 10.500h3c0 2-3 2-3 0z" fill="#eee"/><path d="M5 4h3L5 7h3" fill="none" stroke="#222" stroke-width=".9"/></svg>
</footer>
</body>
</html>
```
FILE: styles.css
```css
* { box-sizing: border-box; }
body { margin: 0; width: 1280px; height: 720px; overflow: hidden; display: flex; flex-direction: column; background: #f0f0f0; font-family: "Open Sans", "Noto Sans", sans-serif; }
svg { display: block; flex: none; }
p, h1, h2 { margin: 0; font-weight: 400; }
.defs { position: absolute; }

.tabs { height: 34px; flex: none; background: #000; display: flex; align-items: center; padding-left: 1px; color: #c4c4c4; font-size: 10.500px; letter-spacing: -0.350px; }
.tab { width: 67.5px; flex: none; height: 26px; display: flex; align-items: center; padding-left: 10.5px; position: relative; }
.tab span { width: 30px; margin-left: 6.500px; white-space: nowrap; -webkit-mask-image: linear-gradient(90deg, #000 55%, transparent 95%); mask-image: linear-gradient(90deg, #000 55%, transparent 95%); }
.tab .short { width: 8px; color: #eee; -webkit-mask-image: none; mask-image: none; }
.tab .x { margin-left: 9px; }
.tab::after { content: ""; position: absolute; right: 0; top: 7px; width: 1px; height: 13px; background: #2c2c2c; }
.quiet::after, .active::after { display: none; }
.active { background: #2f2f2f; border-radius: 7px; width: 64px; margin-left: -1.500px; padding-left: 10px; }
.aa { width: 14px; height: 14px; background: #20a53a; color: #fff; font-size: 10px; line-height: 12px; text-align: center; border-radius: 1px; font-weight: 600; }
.newtab { width: 34px; display: flex; justify-content: center; margin-left: 2px; margin-right: 23.500px; }
.wincell { width: 37.200px; display: flex; justify-content: center; flex: none; }

.toolbar { height: 34px; flex: none; background: #2b2b2b; border-bottom: 1px solid #1d2430; display: flex; align-items: center; padding-left: 4.500px; }
.cell { width: 25px; flex: none; display: flex; justify-content: center; align-items: center; position: relative; }
.mark { margin-left: 111px; }
.address { margin-left: 7.500px; width: 727px; height: 26px; background: #3f3f3f; border-radius: 7px; display: flex; align-items: center; padding-left: 7px; }
.url { margin-left: 12.500px; width: 580px; font-size: 11.500px; letter-spacing: -0.290px; color: #a5a5a5; white-space: nowrap; margin-top: -2px; }
.url b { font-weight: 400; color: #fff; }
.s { margin-left: 3px; }
.bar { width: 1px; height: 13px; background: #777; margin-left: 1px; }
.b { margin-left: 4px; }
.b em { position: absolute; left: 15px; top: -2px; width: 9px; height: 10px; border-radius: 4px; background: #5c6370; color: #fff; font: 7px/10px "Open Sans", sans-serif; text-align: center; }
.t { margin-left: 2px; }
.ext { display: flex; margin-left: 74px; }

.top { height: 50px; flex: none; background: #122143; display: flex; align-items: center; color: #fff; padding-bottom: 1px; }
.logo { width: 447px; padding-left: 36px; display: flex; align-items: center; }
.logo span { margin-left: 6.500px; font: 700 28px/32px "Liberation Sans", sans-serif; letter-spacing: 0.550px; -webkit-text-stroke: 0.700px #fff; margin-top: -3px; }
nav { display: flex; width: 621px; color: #eef1f8; font: 15px/20px "Noto Sans", sans-serif; }
nav a { display: flex; align-items: center; margin-top: -1px; white-space: nowrap; }
nav svg { margin-left: 4px; }
.n1 { width: 118px; letter-spacing: -0.300px; }
.n2 { width: 97px; letter-spacing: -0.400px; }
.n3 { width: 99px; }
.n4 { letter-spacing: -0.400px; }
nav .star { margin-left: 7px; margin-right: -1px; }
.user { display: flex; align-items: center; }
.nine { width: 21px; height: 21px; border-radius: 50%; background: #00bcd4; font-size: 9.500px; line-height: 20px; text-align: center; }
.help { width: 21px; height: 21px; border-radius: 50%; background: #fff; color: #122143; font: 800 16px/21px "Open Sans", sans-serif; text-align: center; margin-left: 26.500px; }
.bell { margin-left: 25.500px; }
.avatar { margin-left: 26px; }
.ucaret { margin-left: 6.500px; }

.sub { height: 42px; flex: none; background: #1b2c55; border-bottom: 1px solid #42506f; display: flex; align-items: center; padding-left: 36px; color: #fff; position: relative; }
.burger { margin-top: 2px; }
.sub h1 { font: 200 21px/28px Inter, "Open Sans", sans-serif; letter-spacing: 0.350px; width: 885px; padding-left: 7px; flex: none; }
.cal { margin-left: 7px; }
.range { margin-left: 5.500px; width: 134px; font-size: 12px; letter-spacing: -0.180px; white-space: nowrap; }
.rcaret { margin-left: 5.500px; }
.exp { margin-left: 18px; }
.ref { margin: 0 12px; }
.fab { position: absolute; left: 1229px; top: 21px; width: 35px; height: 35px; border: 0; border-radius: 50%; background: #00bcd4; display: flex; align-items: center; justify-content: center; box-shadow: 0 2px 4px rgba(0,0,0,.35); z-index: 2; }

.grid { height: 521px; flex: none; padding: 9.500px 15px 0 9px; display: grid; grid-template-columns: repeat(4, 307px); column-gap: 9.400px; grid-template-rows: 221.500px 221.500px; row-gap: 9.800px; }
.card { background: #fff; border-radius: 5px; overflow: hidden; display: flex; flex-direction: column; }
.card h2 { height: 28px; flex: none; padding: 0 12px; font: 13px/26px "Noto Sans", sans-serif; letter-spacing: -0.170px; color: #6b6b6b; }
.card .wide { letter-spacing: 0; }
.thermo { display: flex; padding: 39.500px 0 0 37px; }
.reading { margin-left: 37px; width: 170px; display: flex; flex-direction: column; align-items: center; padding-top: 33px; }
.reading strong { font-size: 26px; line-height: 34px; color: #72ad14; margin-top: -1px; }
.reading span { font-size: 12px; line-height: 18px; letter-spacing: -0.170px; color: #555; font-weight: 300; white-space: nowrap; margin-top: 2px; }
.clock, .textw { flex: 1; display: flex; justify-content: center; align-items: center; }
.clock span { font: 40px/50px "Liberation Mono", monospace; letter-spacing: 3.700px; margin-right: -3.700px; transform: scaleY(1.240); color: #606060; -webkit-text-stroke: 0.300px #606060; padding-top: 5px; }
.textw span { font-size: 16.700px; font-weight: 700; color: #555; padding-top: 3px; white-space: nowrap; }
.thead { height: 32px; flex: none; display: flex; justify-content: space-between; align-items: center; padding: 1px 13px 0 13px; font-size: 11.600px; color: #666; border-bottom: 1.500px solid #eaeaea; }
.tbody { height: 118px; flex: none; display: flex; overflow: hidden; }
.rows { width: 294px; }
.row { height: 31.800px; display: flex; justify-content: space-between; align-items: center; border-bottom: 1px solid #e8e8e8; padding: 0 13.500px 0 13px; font-size: 12px; font-weight: 300; letter-spacing: -0.100px; color: #555; }
.row b { font-weight: 400; color: #ffab57; letter-spacing: 0; }
.scroll { width: 13px; background: #f1f1f1; display: flex; flex-direction: column; align-items: center; padding-top: 6px; }
.scroll i { width: 11px; height: 86px; background: #c1c1c1; margin: 4px 0 9px; }
.pager { display: flex; justify-content: flex-end; gap: 37px; padding: 17px 17px 0 0; }

.chart { width: 307px; height: 193px; }
.gl { stroke: #eeeeee; fill: none; }
.ax { stroke: #d5d5d5; fill: none; }
.yl, .xl, .name { font: 10px "Open Sans", sans-serif; fill: #6a6a6a; }
.xl { text-anchor: middle; }
.name { font-size: 10px; fill: #777; }
.ln { fill: none; stroke-width: 1.800; stroke-linejoin: bevel; }
.c1 { stroke: #88fcbb; }
.c2 { stroke: #1fdfb4; }
.c3 { stroke: #cb4170; }
.c4 { stroke: #1b917f; }
.sb { fill: #dae0eb; }
.sf { fill: #bec4cf; }
.se { stroke: #a7bad4; }

.taskbar { height: 39px; flex: none; display: flex; align-items: center; color: #fff; font-size: 10px; line-height: 13px; background: linear-gradient(90deg, #0a1622 0, #0b1830 90px, #0a1c4e 230px, #0a36b0 290px, #0a3ab8 320px, #0726a0 360px, #051a7c 430px, #0a3ac2 495px, #0624a4 560px, #050f85 660px, #051585 770px, #082c98 860px, #07123e 905px, #080f20 960px, #0a141f 1060px, #09121c 1280px); }
.weather { display: flex; align-items: center; width: 134px; padding-left: 14px; }
.weather p { margin-left: 3px; letter-spacing: -0.400px; }
.weather span { color: #bbb; }
.net { width: 120px; height: 28px; background: #123684; display: flex; align-items: center; padding-left: 3px; font: 700 10px/13px "Open Sans", sans-serif; letter-spacing: -0.250px; }
.net p { width: 74px; white-space: nowrap; }
.net p + p { width: 43px; }
.apps { display: flex; margin-left: 238px; width: 296px; }
.app { width: 36.900px; height: 39px; flex: none; display: flex; align-items: center; justify-content: center; position: relative; }
.app.on { background: rgba(255,255,255,.1); border-radius: 4px; width: 30px; margin: 3px 3.450px; height: 33px; }
.run::after { content: ""; position: absolute; left: 50%; bottom: 3px; width: 5px; height: 2.500px; margin-left: -2.500px; border-radius: 2px; background: #a6abb8; }
.on::after { width: 12px; margin-left: -6px; background: #4cc2ff; bottom: 0; }
.over { position: absolute; right: 0; top: 1px; }
.app em { position: absolute; left: 17px; top: 5px; width: 16px; height: 15px; border-radius: 8px; background: #54b8f0; color: #08203c; font: 8.500px/15px "Open Sans", sans-serif; text-align: center; }
.chev { margin-left: 276px; }
.lang { margin-left: 18px; width: 17px; }
.wifi { margin-left: 17px; }
.spk { margin-left: 6px; }
.bat { margin-left: 9px; }
.time { margin-left: auto; text-align: right; letter-spacing: -0.150px; }
.nb { margin: 0 16px 0 6px; }
```
